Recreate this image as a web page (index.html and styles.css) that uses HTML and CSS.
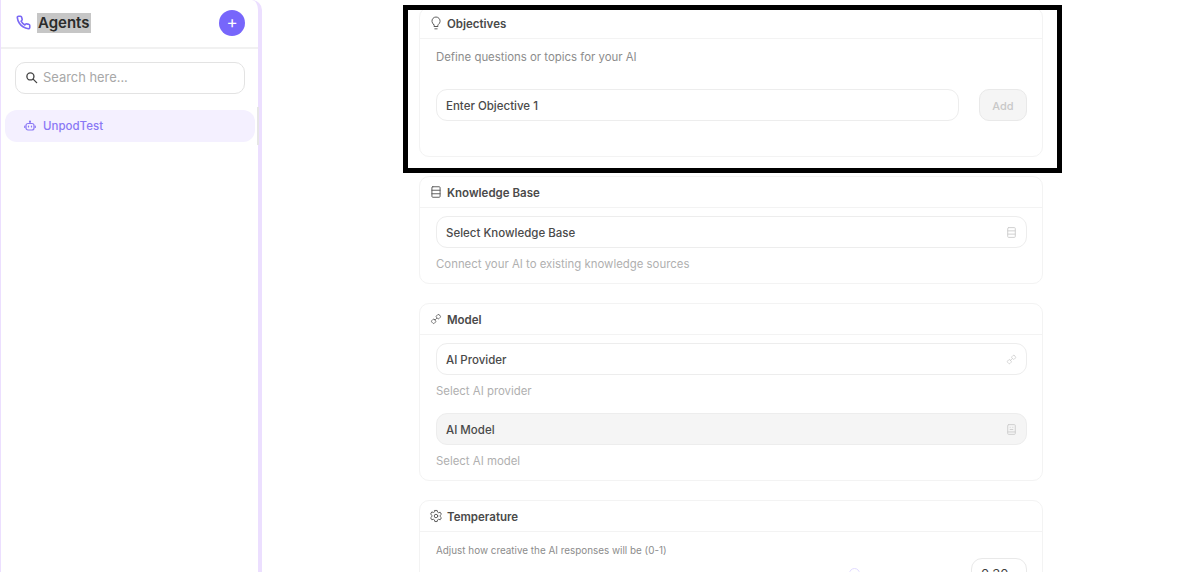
FILE: index.html
```html
<!DOCTYPE html>
<html lang="en">
<head>
  <meta charset="UTF-8" />
  <title>Agents</title>
  <link rel="stylesheet" href="styles.css">
</head>
<body>

<aside class="sidebar">
  <div class="side-head">
    <svg class="phone" viewBox="0 0 24 24"><path d="M22 16.900v3a2 2 0 0 1-2.200 2 19.800 19.800 0 0 1-8.600-3.100 19.500 19.500 0 0 1-6-6A19.800 19.800 0 0 1 2.100 4.200 2 2 0 0 1 4.100 2h3a2 2 0 0 1 2 1.700c.1 1 .4 1.900.7 2.800a2 2 0 0 1-.5 2.100L8.100 9.900a16 16 0 0 0 6 6l1.300-1.300a2 2 0 0 1 2.100-.4c.9.3 1.800.6 2.800.7a2 2 0 0 1 1.700 2z"/></svg>
    <span class="side-title">Agents</span>
    <button class="add-agent">+</button>
  </div>
  <div class="search">
    <svg class="search-icon" viewBox="0 0 24 24"><circle cx="10" cy="10" r="6.500"/><path d="M15 15l6.500 6.500"/></svg>
    <span>Search here...</span>
  </div>
  <div class="agent-item">
    <svg class="bot" viewBox="0 0 24 24"><path d="M12 7V3.500"/><circle cx="12" cy="3" r="1"/><rect x="4" y="7" width="16" height="13" rx="4"/><path d="M9 12v2M15 12v2M1.500 12v3M22.500 12v3"/></svg>
    <span>UnpodTest</span>
  </div>
  <div class="side-scroll"></div>
</aside>

<main class="main">
  <div class="column">

    <section class="card card-objectives">
      <div class="card-head">
        <svg class="icon" viewBox="0 0 24 24"><path d="M9 18h6M10 22h4M8 14.500a7 7 0 1 1 8 0c-.8.7-1 1.500-1 3.500H9c0-2-.2-2.800-1-3.500z"/></svg>
        <span>Objectives</span>
      </div>
      <div class="card-body">
        <p class="desc">Define questions or topics for your AI</p>
        <div class="objective-row">
          <div class="field grow">Enter Objective 1</div>
          <button class="add-btn">Add</button>
        </div>
      </div>
    </section>

    <section class="card">
      <div class="card-head">
        <svg class="icon" viewBox="0 0 24 24"><rect x="5" y="3" width="14" height="18" rx="1.500"/><path d="M5 9h14M5 15h14"/></svg>
        <span>Knowledge Base</span>
      </div>
      <div class="card-body">
        <div class="field">
          <span>Select Knowledge Base</span>
          <svg class="field-icon" viewBox="0 0 24 24"><rect x="5" y="3" width="14" height="18" rx="1.500"/><path d="M5 9h14M5 15h14"/></svg>
        </div>
        <p class="hint">Connect your AI to existing knowledge sources</p>
      </div>
    </section>

    <section class="card">
      <div class="card-head">
        <svg class="icon" viewBox="-3 -3 30 30"><rect x="13" y="3" width="8" height="8" rx="2.500" transform="rotate(45 17 7)"/><rect x="3" y="13" width="8" height="8" rx="2.500" transform="rotate(45 7 17)"/><path d="M10 14l4-4"/></svg>
        <span>Model</span>
      </div>
      <div class="card-body">
        <div class="field">
          <span>AI Provider</span>
          <svg class="field-icon" viewBox="-3 -3 30 30"><rect x="13" y="3" width="8" height="8" rx="2.500" transform="rotate(45 17 7)"/><rect x="3" y="13" width="8" height="8" rx="2.500" transform="rotate(45 7 17)"/><path d="M10 14l4-4"/></svg>
        </div>
        <p class="hint">Select AI provider</p>
        <div class="field field-off">
          <span>AI Model</span>
          <svg class="field-icon" viewBox="0 0 24 24"><rect x="5" y="3" width="14" height="18" rx="1.500"/><path d="M9.500 8h.01M14.500 8h.01M9.500 12h5M5 16.500h14"/></svg>
        </div>
        <p class="hint">Select AI model</p>
      </div>
    </section>

    <section class="card">
      <div class="card-head">
        <svg class="icon" viewBox="0 0 24 24"><circle cx="12" cy="12" r="3"/><path d="M10 2.500h4l.6 2.800 1.900 1.100 2.700-.9 2 3.500-2.100 1.900v2.200l2.100 1.900-2 3.500-2.700-.9-1.900 1.100-.6 2.800h-4l-.6-2.800-1.900-1.100-2.700.9-2-3.500 2.100-1.900v-2.200L2.800 8.500l2-3.500 2.700.9 1.900-1.100z"/></svg>
        <span>Temperature</span>
      </div>
      <div class="card-body">
        <p class="desc-small">Adjust how creative the AI responses will be (0-1)</p>
        <div class="temp-row">
          <div class="slider"><span class="thumb"></span></div>
          <div class="temp-value">0.30</div>
        </div>
      </div>
    </section>

  </div>
</main>

<div class="highlight-box"></div>

</body>
</html>
```

FILE: styles.css
```css
* { box-sizing: border-box; }

body {
  margin: 0;
  height: 100vh;
  overflow: hidden;
  display: flex;
  font-family: 'Inter', sans-serif;
  background: #fff;
  color: #3f3f3f;
}

svg {
  fill: none;
  stroke: currentColor;
  stroke-width: 1.800;
  stroke-linecap: round;
  stroke-linejoin: round;
  flex-shrink: 0;
}

p { margin: 0; }

/* sidebar */
.sidebar {
  position: relative;
  width: 262px;
  flex-shrink: 0;
  background: #fff;
  border-left: 1px solid #ecdfff;
  border-right: 4px solid #ecdfff;
  border-top-right-radius: 10px;
}

.side-head {
  height: 49px;
  display: flex;
  align-items: center;
  padding: 0 13px 2px 15px;
  border-bottom: 2px solid #f1f1f1;
}

.phone {
  width: 15px;
  height: 15px;
  color: #7b68f5;
  stroke-width: 2.600;
}

.side-title {
  margin-left: 6px;
  padding: 0 1px;
  font-size: 15px;
  font-weight: 600;
  line-height: 20px;
  color: #2b2b2b;
  background: #c6c6c6;
}

.add-agent {
  margin-left: auto;
  width: 26px;
  height: 26px;
  padding: 0 0 1px;
  border: none;
  border-radius: 50%;
  background: #7766fb;
  color: #fff;
  font: 400 17px/25px 'Inter', sans-serif;
}

.search {
  height: 32px;
  margin: 13px 13px 0 14px;
  padding: 0 9px 1px;
  display: flex;
  align-items: center;
  gap: 5px;
  border: 1px solid #e3e3e3;
  border-radius: 10px;
  font-size: 12.900px;
  color: #a8a8a8;
}

.search-icon {
  width: 13px;
  height: 13px;
  color: #444;
  stroke-width: 2.500;
}

.agent-item {
  height: 32px;
  margin: 16px 3px 0 4px;
  padding: 0 19px;
  display: flex;
  align-items: center;
  gap: 7px;
  border-radius: 12px;
  background: #f4f0ff;
  font-size: 11.500px;
  font-weight: 500;
  color: #8a78f5;
}

.bot {
  width: 12px;
  height: 12px;
  stroke-width: 2.400;
}

.side-scroll {
  position: absolute;
  top: 107px;
  right: -1px;
  width: 2px;
  height: 38px;
  background: #e6e6e6;
}

/* main column */
.main {
  flex: 1;
  padding: 7px 0 0 157px;
}

.column {
  width: 624px;
  display: flex;
  flex-direction: column;
  gap: 19px;
}

.card {
  border: 1px solid #f3f3f3;
  border-radius: 10px;
  background: #fff;
}

.card-objectives {
  height: 150px;
}

.card-head {
  height: 31px;
  padding: 2px 9px 0;
  display: flex;
  align-items: center;
  gap: 4px;
  border-bottom: 1px solid #f3f3f3;
  font-size: 11.500px;
  font-weight: 600;
  color: #4a4a4a;
}

.icon {
  width: 14px;
  height: 14px;
  margin-top: -2px;
  color: #555;
  stroke-width: 1.600;
}

.card-body {
  padding: 8px 15px 0 16px;
}

.desc {
  height: 42px;
  padding-top: 3px;
  font-size: 11.400px;
  line-height: 15px;
  color: #8c8c8c;
}

.desc-small {
  padding-top: 3px;
  font-size: 9.900px;
  line-height: 15px;
  color: #8c8c8c;
}

.objective-row {
  display: flex;
  align-items: center;
  gap: 20px;
}

.field {
  height: 32px;
  padding: 1px 8px 0 9px;
  display: flex;
  align-items: center;
  justify-content: space-between;
  border: 1.500px solid #ededed;
  border-radius: 11px;
  background: #fff;
  font-size: 11.500px;
  font-weight: 500;
  color: #4a4a4a;
}

.grow { flex: 1; }

.field-off { background: #f5f5f5; }

.field-icon {
  width: 13px;
  height: 13px;
  color: #cfcfcf;
}

.hint {
  height: 38px;
  padding-top: 9px;
  font-size: 11.400px;
  line-height: 15px;
  color: #b0b0b0;
}

.hint:last-child { height: 35px; }

.add-btn {
  width: 48px;
  height: 32px;
  padding: 1px 0 0;
  border: 1.500px solid #e9e9e9;
  border-radius: 10px;
  background: #f5f5f5;
  color: #c8c8c8;
  font: 500 11px 'Inter', sans-serif;
}

.temp-row {
  display: flex;
  align-items: flex-start;
  justify-content: flex-end;
  gap: 111px;
}

.slider {
  width: 11px;
  padding-top: 10px;
}

.thumb {
  display: block;
  width: 11px;
  height: 11px;
  border: 1.500px solid #e2dcff;
  border-radius: 50%;
}

.temp-value {
  width: 56px;
  height: 32px;
  padding-left: 9px;
  border: 1.500px solid #e9e9e9;
  border-radius: 11px;
  font-size: 13px;
  line-height: 30px;
}

/* black frame drawn over the first card */
.highlight-box {
  position: absolute;
  left: 403px;
  top: 5px;
  width: 659px;
  height: 168px;
  border: 5px solid #000;
  pointer-events: none;
}
```
